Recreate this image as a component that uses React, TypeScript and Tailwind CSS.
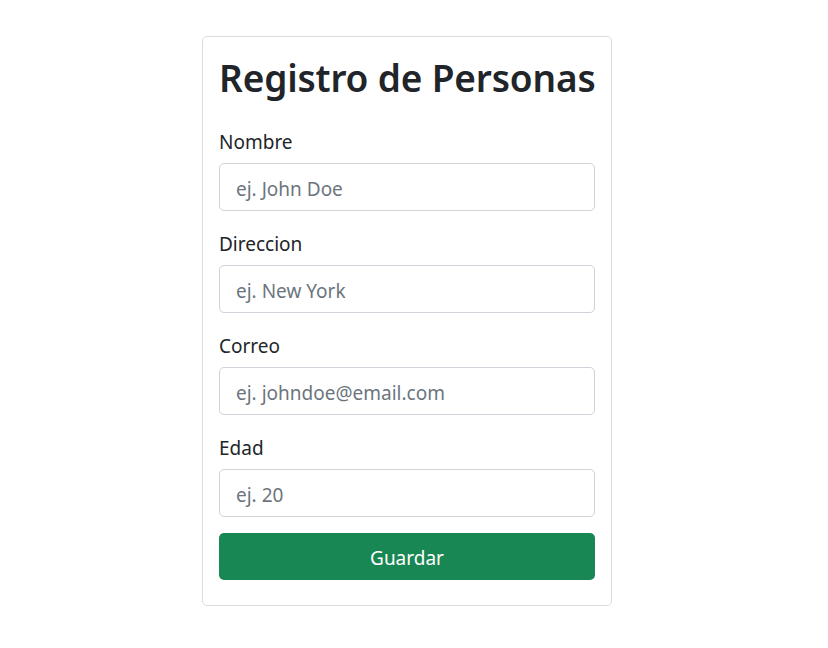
import React, { useState } from 'react';

const fields = [
    { id: 'nombre', label: 'Nombre', placeholder: 'ej. John Doe', type: 'text' },
    { id: 'direccion', label: 'Direccion', placeholder: 'ej. New York', type: 'text' },
    { id: 'correo', label: 'Correo', placeholder: 'ej. johndoe@email.com', type: 'email' },
    { id: 'edad', label: 'Edad', placeholder: 'ej. 20', type: 'number' },
];

export default function App() {
    const [values, setValues] = useState<Record<string, string>>({});

    return (
        <div
            className="min-h-[648px] bg-white flex justify-center pt-[36px] pr-[14px] text-[#212529]"
            style={{ fontFamily: '"Noto Sans", "Open Sans", sans-serif' }}
        >
            <div className="w-[410px] self-start border border-[#dcdcdc] rounded-[5px] px-4 pt-4 pb-[25px]">
                {/* Title */}
                <h1 className="text-[37px] leading-[48px] font-semibold tracking-[-0.15px] pt-[1px] mb-[23px] whitespace-nowrap">
                    Registro de Personas
                </h1>

                {/* Form */}
                <form onSubmit={e => e.preventDefault()}>
                    {fields.map(f => (
                        <div key={f.id} className="mb-4">
                            <label htmlFor={f.id} className="block text-[19px] leading-[30px] pt-[2px] mb-[6px]">
                                {f.label}
                            </label>
                            <input
                                id={f.id}
                                type={f.type}
                                placeholder={f.placeholder}
                                value={values[f.id] || ''}
                                onChange={e => setValues({ ...values, [f.id]: e.target.value })}
                                className="block w-full h-12 px-4 pt-[3px] text-[19px] leading-[30px] border border-[#ced4da] rounded-[5px] outline-none placeholder:text-[#6c757d]"
                            />
                        </div>
                    ))}
                    <button
                        type="submit"
                        className="w-full h-[47px] pt-[4px] bg-[#198754] text-white text-[19px] rounded-[5px]"
                    >
                        Guardar
                    </button>
                </form>
            </div>
        </div>
    );
}
